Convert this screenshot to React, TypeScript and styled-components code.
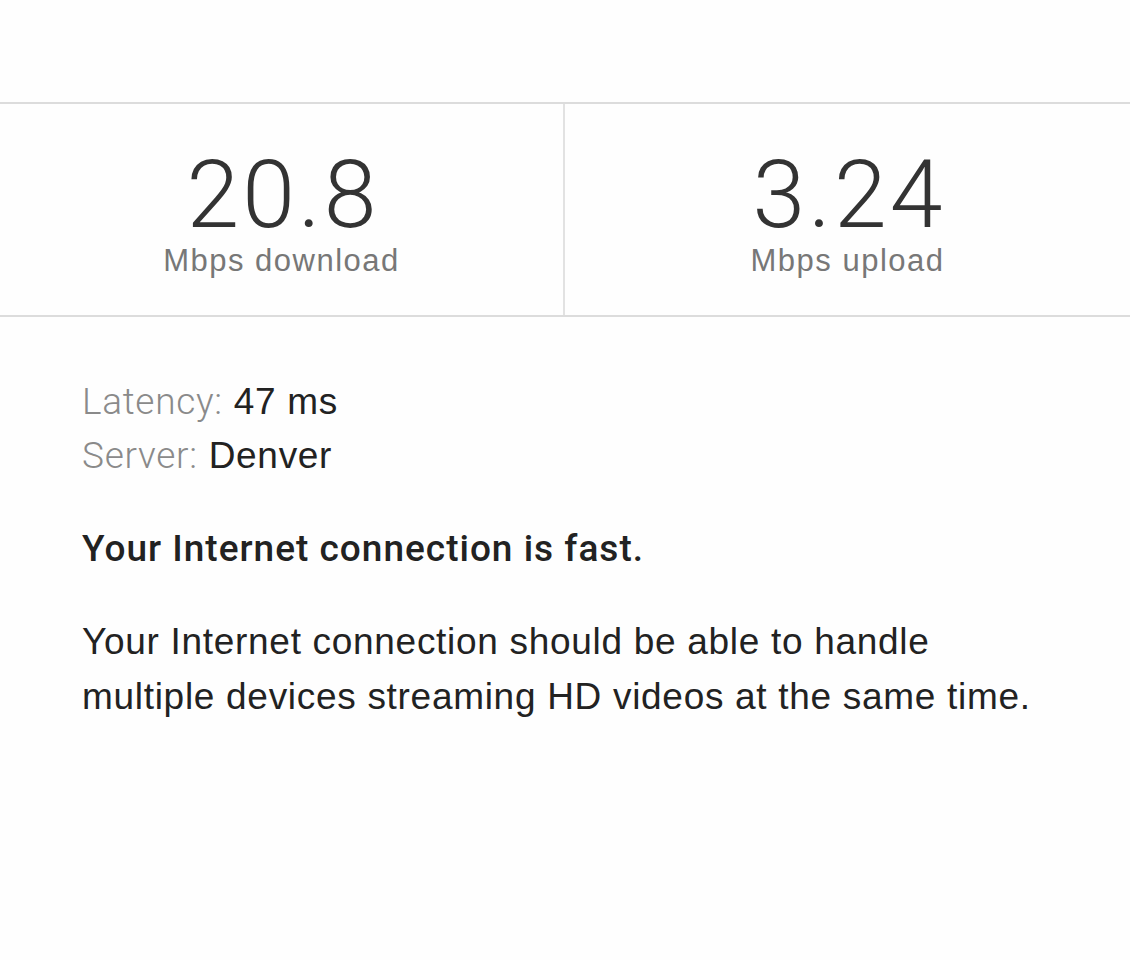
import React from "react";
import styled, { createGlobalStyle } from "styled-components";

const Global = createGlobalStyle`
  html, body { margin: 0; padding: 0; background: #fefefe; }
  body { font-family: "Liberation Sans", Arial, sans-serif; color: #222; }
`;

const Page = styled.div`
  padding-top: 102px;
  width: 1130px;
`;

const Stats = styled.div`
  display: grid;
  grid-template-columns: 565px 1fr;
  border-top: 2px solid #dcdcdc;
  border-bottom: 2px solid #dcdcdc;
  height: 215px;
  box-sizing: border-box;
`;

const Stat = styled.div<{ $divider?: boolean }>`
  display: flex;
  flex-direction: column;
  align-items: center;
  padding-top: 43px;
  border-right: ${(p) => (p.$divider ? "2px solid #e2e2e2" : "none")};
`;

const Value = styled.div`
  font-family: "Roboto", "Liberation Sans", sans-serif;
  font-weight: 300;
  font-size: 95px;
  line-height: 96px;
  color: #333;
  letter-spacing: 3px;
  padding-left: 3px;
`;

const Unit = styled.div`
  font-family: "Liberation Sans", Arial, sans-serif;
  font-size: 31px;
  line-height: 36px;
  color: #777;
  letter-spacing: 1.5px;
`;

const Content = styled.div`
  padding: 58px 82px 0;
  font-size: 37px;
  letter-spacing: 0.7px;
`;

const Meta = styled.div`
  line-height: 54px;
  color: #222;
`;

const Key = styled.span`
  color: #8a8a8a;
  font-family: "Roboto", "Liberation Sans", sans-serif;
  font-weight: 300;
`;

const Headline = styled.p`
  margin: 46px 0 0;
  line-height: 40px;
  font-weight: 500;
  font-family: "Roboto", "Liberation Sans", sans-serif;
  letter-spacing: 1px;
  color: #222;
`;

const Body = styled.p`
  margin: 45px 0 0;
  line-height: 55px;
  color: #222;
`;

export default function App() {
  return (
    <Page>
      <Global />
      <Stats>
        <Stat $divider>
          <Value>20.8</Value>
          <Unit>Mbps download</Unit>
        </Stat>
        <Stat>
          <Value>3.24</Value>
          <Unit>Mbps upload</Unit>
        </Stat>
      </Stats>
      <Content>
        <Meta>
          <Key>Latency:</Key> 47 ms
        </Meta>
        <Meta>
          <Key>Server:</Key> Denver
        </Meta>
        <Headline>Your Internet connection is fast.</Headline>
        <Body>
          Your Internet connection should be able to handle
          <br />
          multiple devices streaming HD videos at the same time.
        </Body>
      </Content>
    </Page>
  );
}
